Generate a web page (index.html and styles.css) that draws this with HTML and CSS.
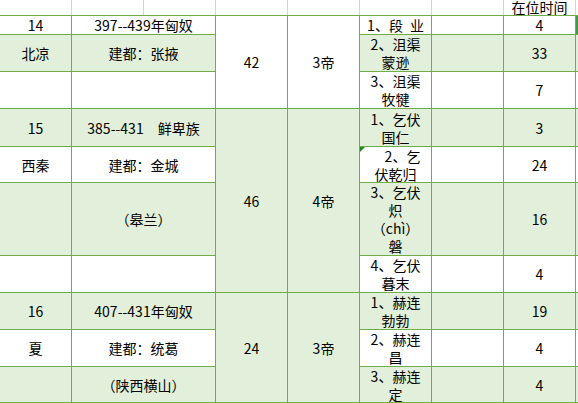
FILE: index.html
```html
<!DOCTYPE html>
<html lang="zh-CN">
<head>
<meta charset="utf-8">
<title>十六国 在位时间</title>
<link rel="stylesheet" href="styles.css">
</head>
<body>
<div class="sheet">
  <div class="head">
    <div class="hc"></div>
    <div class="hc"></div>
    <div class="hc"></div>
    <div class="hc"></div>
    <div class="hc"></div>
    <div class="hc"></div>
    <div class="hc"></div>
    <div class="hc hc-title">在位时间</div>
    <div class="hc-end"></div>
  </div>
  <div class="grid">
    <!-- row 1 -->
    <div class="c"><span>14</span></div>
    <div class="c span2"><span>397--439年匈奴</span></div>
    <div class="c rs3"><span>42</span></div>
    <div class="c rs3"><span>3帝</span></div>
    <div class="c"><span>1、段&ensp;业</span></div>
    <div class="c"></div>
    <div class="c"><span>4</span></div>
    <div class="c sel"></div>
    <!-- row 2 -->
    <div class="c g"><span>北凉</span></div>
    <div class="c g span2"><span>建都：张掖</span></div>
    <div class="c g"><span>2、沮渠<br>蒙逊</span></div>
    <div class="c g"></div>
    <div class="c g"><span>33</span></div>
    <div class="c g"></div>
    <!-- row 3 -->
    <div class="c"></div>
    <div class="c span2"></div>
    <div class="c"><span>3、沮渠<br>牧犍</span></div>
    <div class="c"></div>
    <div class="c"><span>7</span></div>
    <div class="c"></div>
    <!-- row 4 -->
    <div class="c g"><span>15</span></div>
    <div class="c g span2"><span>385--431&emsp;鲜卑族</span></div>
    <div class="c g rs4"><span>46</span></div>
    <div class="c g rs4"><span>4帝</span></div>
    <div class="c g"><span>1、乞伏<br>国仁</span></div>
    <div class="c g"></div>
    <div class="c g"><span>3</span></div>
    <div class="c g"></div>
    <!-- row 5 -->
    <div class="c"><span>西秦</span></div>
    <div class="c span2"><span>建都：金城</span></div>
    <div class="c note"><span><span class="indent">2、乞</span><br>伏乾归</span></div>
    <div class="c"></div>
    <div class="c"><span>24</span></div>
    <div class="c"></div>
    <!-- row 6 -->
    <div class="c g"></div>
    <div class="c g span2"><span>（皋兰）</span></div>
    <div class="c g"><span>3、乞伏<br>炽<br>（chì）<br>磐</span></div>
    <div class="c g"></div>
    <div class="c g"><span>16</span></div>
    <div class="c g"></div>
    <!-- row 7 -->
    <div class="c"></div>
    <div class="c span2"></div>
    <div class="c"><span>4、乞伏<br>暮末</span></div>
    <div class="c"></div>
    <div class="c"><span>4</span></div>
    <div class="c"></div>
    <!-- row 8 -->
    <div class="c g"><span>16</span></div>
    <div class="c g span2"><span>407--431年匈奴</span></div>
    <div class="c g rs3"><span>24</span></div>
    <div class="c g rs3"><span>3帝</span></div>
    <div class="c g"><span>1、赫连<br>勃勃</span></div>
    <div class="c g"></div>
    <div class="c g"><span>19</span></div>
    <div class="c g"></div>
    <!-- row 9 -->
    <div class="c"><span>夏</span></div>
    <div class="c span2"><span>建都：统葛</span></div>
    <div class="c"><span>2、赫连<br>昌</span></div>
    <div class="c"></div>
    <div class="c"><span>4</span></div>
    <div class="c"></div>
    <!-- row 10 -->
    <div class="c g"></div>
    <div class="c g span2"><span>（陕西横山）</span></div>
    <div class="c g"><span>3、赫连<br>定</span></div>
    <div class="c g"></div>
    <div class="c g"><span>4</span></div>
    <div class="c g"></div>
  </div>
</div>
</body>
</html>
```
FILE: styles.css
```css
html, body {
  margin: 0;
  padding: 0;
  background: #ffffff;
}

body {
  font-family: "Noto Sans CJK SC", sans-serif;
  font-size: 14px;
  color: #000000;
}

.sheet {
  width: 578px;
  height: 403px;
  overflow: hidden;
}

.head {
  display: flex;
  height: 15px;
}

.hc {
  flex: none;
  width: 71px;
  height: 15px;
  border-right: 1px solid #d4d4d4;
}

.hc-title {
  font-size: 14px;
  line-height: 14px;
  text-align: center;
  white-space: nowrap;
}

.hc-end {
  flex: none;
  width: 2px;
}

.grid {
  display: grid;
  grid-template-columns: repeat(8, 71px) 2px;
  grid-template-rows: 18px 36px 36px 37px 35px 72px 36px 36px 36px 35px;
  gap: 1px;
  padding: 1px 0;
  background: #70ad47;
}

.c {
  background: #ffffff;
  display: flex;
  align-items: center;
  justify-content: center;
  text-align: center;
  line-height: 18px;
  white-space: nowrap;
  overflow: hidden;
}

.g {
  background: #e2efda;
}

.span2 {
  grid-column: span 2;
}

.rs3 {
  grid-row: span 3;
}

.rs4 {
  grid-row: span 4;
}

.sel {
  background: #3f9b48;
}

.note {
  position: relative;
}

.note::before {
  content: "";
  position: absolute;
  left: 0;
  top: 0;
  border-top: 5px solid #1e8a1e;
  border-right: 5px solid transparent;
}

.indent {
  padding-left: 14px;
}
```
